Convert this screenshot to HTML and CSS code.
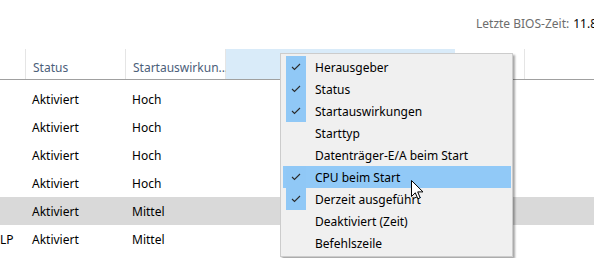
FILE: index.html
```html
<!DOCTYPE html>
<html lang="de">
<head>
    <meta charset="UTF-8">
    <title>Autostart</title>
    <link rel="stylesheet" href="styles.css">
</head>
<body>

    <div class="toolbar">
        <span class="bios-label">Letzte BIOS-Zeit:</span>
        <span class="bios-value">11.8</span>
    </div>

    <!-- Column headers -->
    <div class="header">
        <div class="col col-name"></div>
        <div class="col col-status">Status</div>
        <div class="col col-impact">Startauswirkun...</div>
        <div class="col col-hover"></div>
        <div class="col col-extra"></div>
        <div class="col col-rest"></div>
    </div>

    <div class="rows">
        <div class="row"><span class="cell-name"></span><span class="cell-status">Aktiviert</span><span>Hoch</span></div>
        <div class="row"><span class="cell-name"></span><span class="cell-status">Aktiviert</span><span>Hoch</span></div>
        <div class="row"><span class="cell-name"></span><span class="cell-status">Aktiviert</span><span>Hoch</span></div>
        <div class="row"><span class="cell-name"></span><span class="cell-status">Aktiviert</span><span>Hoch</span></div>
        <div class="row selected"><span class="cell-name"></span><span class="cell-status">Aktiviert</span><span>Mittel</span></div>
        <div class="row"><span class="cell-name">LP</span><span class="cell-status">Aktiviert</span><span>Mittel</span></div>
    </div>

    <!-- Column chooser context menu -->
    <div class="menu">
        <div class="item checked"><span class="check"><svg width="10" height="8" viewBox="0 0 10 8"><polyline points="1,4 3.5,6.5 9,1" fill="none" stroke="#2b2b2b" stroke-width="1.1"/></svg></span><span class="label">Herausgeber</span></div>
        <div class="item checked"><span class="check"><svg width="10" height="8" viewBox="0 0 10 8"><polyline points="1,4 3.5,6.5 9,1" fill="none" stroke="#2b2b2b" stroke-width="1.1"/></svg></span><span class="label">Status</span></div>
        <div class="item checked"><span class="check"><svg width="10" height="8" viewBox="0 0 10 8"><polyline points="1,4 3.5,6.5 9,1" fill="none" stroke="#2b2b2b" stroke-width="1.1"/></svg></span><span class="label">Startauswirkungen</span></div>
        <div class="item"><span class="check"></span><span class="label">Starttyp</span></div>
        <div class="item"><span class="check"></span><span class="label">Datenträger-E/A beim Start</span></div>
        <div class="item checked hover"><span class="check"><svg width="10" height="8" viewBox="0 0 10 8"><polyline points="1,4 3.5,6.5 9,1" fill="none" stroke="#2b2b2b" stroke-width="1.1"/></svg></span><span class="label">CPU beim Start</span></div>
        <div class="item checked"><span class="check"><svg width="10" height="8" viewBox="0 0 10 8"><polyline points="1,4 3.5,6.5 9,1" fill="none" stroke="#2b2b2b" stroke-width="1.1"/></svg></span><span class="label">Derzeit ausgeführt</span></div>
        <div class="item"><span class="check"></span><span class="label">Deaktiviert (Zeit)</span></div>
        <div class="item"><span class="check"></span><span class="label">Befehlszeile</span></div>
    </div>

    <!-- Mouse pointer -->
    <svg class="cursor" width="13" height="21" viewBox="0 0 13 21">
        <path d="M0.5,0.5 L0.5,16.5 L4.3,12.8 L6.8,18.8 L9.2,17.8 L6.7,11.9 L12,11.9 Z" fill="#ffffff" stroke="#000000" stroke-width="1"/>
    </svg>

</body>
</html>
```

FILE: styles.css
```css
body {
    margin: 0;
    font-family: "Noto Sans", sans-serif;
    font-size: 12px;
    color: #000;
    background: #fff;
    width: 594px;
    height: 258px;
    overflow: hidden;
    position: relative;
}

.toolbar {
    height: 49px;
    padding-left: 476px;
    display: flex;
    align-items: center;
    white-space: nowrap;
    overflow: hidden;
    box-sizing: border-box;
    padding-bottom: 2px;
}

.bios-label {
    color: #6d6d6d;
    margin-right: 4px;
}

.header {
    display: flex;
    height: 30px;
    border-bottom: 1px solid #a0a0a0;
    color: #4c607a;
}

.col {
    box-sizing: border-box;
    border-right: 1px solid #e5e5e5;
    padding: 10px 0 0 7px;
    white-space: nowrap;
}

.col-name { width: 26px; }
.col-status { width: 100px; }
.col-impact { width: 100px; }
.col-hover { width: 229px; background: #d9ebf9; border-right-color: #d9ebf9; }
.col-extra { width: 70px; }
.col-rest { flex: 1; border-right: none; }

.rows {
    margin-top: 5px;
}

.row {
    display: flex;
    height: 28px;
    align-items: center;
    white-space: nowrap;
}

.row.selected {
    background: #d9d9d9;
}

.cell-name {
    width: 32px;
}

.cell-status {
    width: 100px;
}

.menu {
    position: absolute;
    left: 280px;
    top: 53px;
    width: 228px;
    padding: 2px 1px 2px 2px;
    background: #f0f0f0;
    border: 1px solid #cccccc;
    box-shadow: 2px 2px 2px rgba(0, 0, 0, 0.35);
}

.item {
    display: flex;
    align-items: center;
    height: 22px;
    padding-left: 3px;
    white-space: nowrap;
}

.item.hover {
    background: #91c9f7;
}

.check {
    width: 20px;
    height: 22px;
    display: flex;
    align-items: center;
    justify-content: center;
}

.item.checked .check {
    background: #90c8f6;
}

.label {
    margin-left: 9px;
}

.cursor {
    position: absolute;
    left: 411px;
    top: 180px;
}
```
